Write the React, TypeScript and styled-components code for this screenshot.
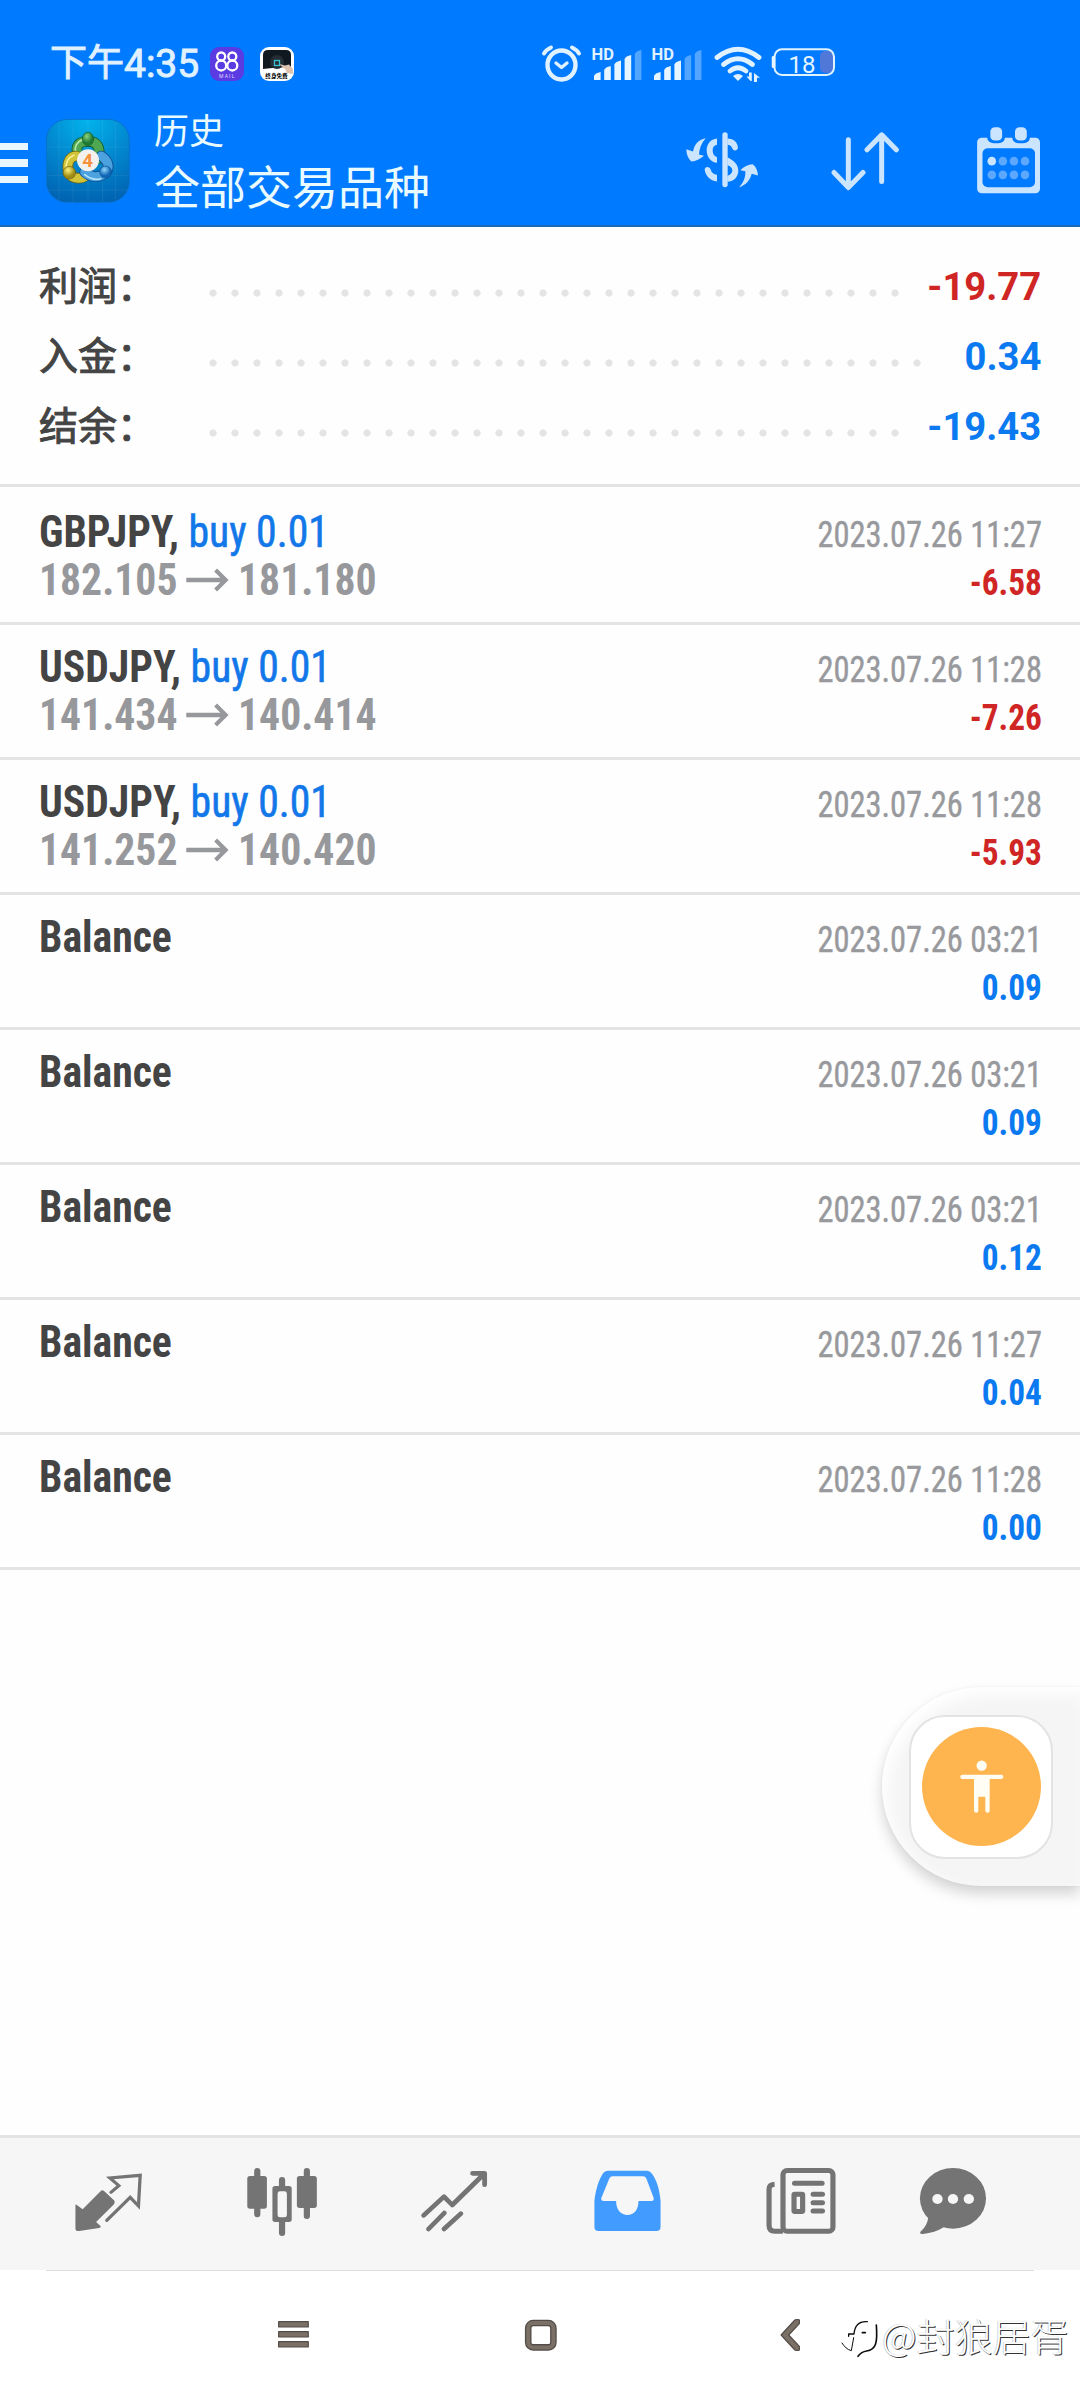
import React from 'react';
import styled, { createGlobalStyle } from 'styled-components';

const BLUE = '#007aff';
const GREY = '#747474';
const ICON = '#cce5ff';
const CJK = '"Noto Sans CJK SC", sans-serif';

const GlobalStyle = createGlobalStyle`
  * { box-sizing: border-box; }
  body { margin: 0; background: #fff; font-family: Roboto, ${CJK}; }
  svg { display: block; flex: none; }
`;

const Screen = styled.div`
  position: relative;
  width: 1080px;
  height: 2400px;
  display: flex;
  flex-direction: column;
  overflow: hidden;
  background: #fefefe;
`;

/* ---------- header ---------- */
const Header = styled.header`
  height: 227px;
  background: ${BLUE};
  border-bottom: 2px solid #1a6ab8;
`;
const StatusBar = styled.div`
  height: 92px;
  padding: 36px 0 0 50px;
  display: flex;
  align-items: center;
`;
const Clock = styled.span`
  width: 160px;
  font: 400 39px/56px Roboto, ${CJK};
  color: #e0f1ff;
  -webkit-text-stroke: 0.9px #e0f1ff;
  white-space: nowrap;
  display: flex;
`;
const ClockPrefix = styled.span`
  font-size: 37px;
`;
const Badge = styled.div<{ $bg: string }>`
  width: 34px;
  height: 34px;
  margin-right: 16px;
  border-radius: 9px;
  background: ${(p) => p.$bg};
  overflow: hidden;
`;
const StatusIcons = styled.div`
  margin-left: 226px;
`;
const AppBar = styled.div`
  height: 133px;
  padding: 4px 40px 0 0;
  display: flex;
  align-items: center;
`;
const Burger = styled.div`
  width: 28px;
  display: flex;
  flex-direction: column;
  gap: 9px;
  margin: 5px 18px 0 0;
`;
const BurgerLine = styled.i`
  height: 7.6px;
  background: #e8f7ff;
`;
const Titles = styled.div`
  margin-left: 24px;
  display: flex;
  flex-direction: column;
  color: #eafbff;
  font-family: ${CJK};
  white-space: nowrap;
`;
const Title = styled.div`
  font-size: 35px;
  line-height: 44px;
  margin-bottom: 2px;
`;
const Subtitle = styled.div`
  font-size: 46px;
  line-height: 62px;
`;
const Actions = styled.div`
  margin-left: auto;
  display: flex;
`;
const Action = styled.div<{ $gap?: number }>`
  margin-left: ${(p) => p.$gap || 0}px;
`;

/* ---------- summary ---------- */
const Summary = styled.section`
  height: 260px;
  padding: 24px 39px 0 39px;
  border-bottom: 3px solid #e4e4e4;
`;
const SummaryRow = styled.div`
  height: 70px;
  display: flex;
  align-items: center;
`;
const SummaryLabel = styled.span`
  width: 163px;
  margin-bottom: 6px;
  font: 400 39px/60px ${CJK};
  color: #444;
  -webkit-text-stroke: 1px #444;
  white-space: nowrap;
`;
const Dots = styled.div`
  flex: 1;
  height: 22px;
  margin: 14px 16px 0 0;
  display: flex;
  flex-wrap: wrap;
  overflow: hidden;
`;
const Dot = styled.i`
  width: 22px;
  height: 22px;
  background: radial-gradient(circle at 50% 50%, #e4e4e4 3.2px, transparent 4px);
`;
const SummaryValue = styled.span<{ $color: string }>`
  margin-top: 2px;
  font: 700 39px/60px Roboto, sans-serif;
  color: ${(p) => p.$color};
  transform: scaleX(0.98);
  transform-origin: right;
`;

/* ---------- deals ---------- */
const List = styled.section`
  padding-top: 3px;
  flex: 1;
`;
const Deal = styled.article`
  height: 135px;
  padding: 0 38px 0 39px;
  display: flex;
  justify-content: space-between;
  border-bottom: 3px solid #e4e4e4;
  font-family: 'Roboto Condensed', Roboto, sans-serif;
  white-space: nowrap;
`;
const DealLeft = styled.div`
  padding-top: 18px;
  font-size: 44px;
  line-height: 48px;
  transform: scaleX(0.947);
  transform-origin: left;
`;
const DealRight = styled.div`
  padding-top: 21px;
  font-size: 36px;
  line-height: 48px;
  text-align: right;
`;
const Name = styled.div`
  font-weight: 700;
  color: #444;
`;
const Side = styled.span`
  font-weight: 400;
  color: #1277e8;
  -webkit-text-stroke: 0.6px #1277e8;
`;
const Prices = styled.div`
  display: flex;
  align-items: center;
  font-weight: 700;
  color: #97989c;
  gap: 9px;
`;
const When = styled.div`
  color: #98999d;
  -webkit-text-stroke: 0.4px #98999d;
  transform: scaleX(0.902);
  transform-origin: right;
`;
const Profit = styled.div<{ $color: string }>`
  font-weight: 700;
  color: ${(p) => p.$color};
  transform: scaleX(0.925);
  transform-origin: right;
`;

/* ---------- floating accessibility panel ---------- */
const Floating = styled.div`
  position: absolute;
  top: 1687px;
  right: 0;
  width: 198px;
  height: 199px;
  padding-left: 27px;
  display: flex;
  align-items: center;
  border-radius: 100px 0 0 100px;
  background: #f5f5f5;
  box-shadow: 0 8px 14px rgba(0, 0, 0, 0.17), 0 0 3px rgba(0, 0, 0, 0.05),
    inset 6px 8px 16px #fff;
`;
const FloatingCard = styled.div`
  width: 144px;
  height: 144px;
  display: flex;
  align-items: center;
  justify-content: center;
  border: 2px solid #e3e3e3;
  border-radius: 36px;
  background: #fff;
`;
const Disc = styled.div`
  width: 119px;
  height: 119px;
  border-radius: 50%;
  background: #feb54f;
`;

/* ---------- bottom ---------- */
const Tabs = styled.nav`
  height: 135px;
  flex: none;
  padding: 0 0 6px 22px;
  display: flex;
  align-items: center;
  background: #f6f6f6;
  border-top: 3px solid #e3e5e4;
`;
const Tab = styled.div<{ $w?: number }>`
  width: ${(p) => p.$w || 173}px;
  display: flex;
  justify-content: center;
`;
const SystemNav = styled.nav`
  position: relative;
  height: 130px;
  flex: none;
  background: #fff;
`;
const Hairline = styled.div`
  height: 1px;
  margin: 0 46px;
  background: #dedede;
`;
const NavKeys = styled.div`
  display: flex;
  padding: 48px 0 0 278px;
`;
const NavKey = styled.div<{ $gap?: number }>`
  margin-left: ${(p) => p.$gap || 0}px;
`;
const Watermark = styled.div`
  position: absolute;
  left: 840px;
  top: 37px;
  display: flex;
  align-items: center;
  white-space: nowrap;
`;
const WatermarkText = styled.span`
  margin-left: 2px;
  font: 300 38px/56px ${CJK};
  color: #fff;
  text-shadow: 1px 1px 0.5px #333, -0.5px -0.5px 1px #bbb;
`;

/* An icon whose view box is a window of the screen, in screen pixels. */
type Win = { x: number; y: number; w: number; h: number; children: React.ReactNode };
const Icon = ({ x, y, w, h, children }: Win) => (
  <svg width={w} height={h} viewBox={`${x} ${y} ${w} ${h}`} fill="none" strokeLinecap="round" strokeLinejoin="round">
    {children}
  </svg>
);

const Signal = ({ x, level }: { x: number; level: number }) => (
  <g>
    <text x={x - 1.5} y={60} fontSize="16.5" fontWeight="700" fontFamily="Roboto, sans-serif" fill="#e0f1ff">HD</text>
    {[72, 66, 60.5, 55, 50].map((t, i) => (
      <path
        key={i}
        d={`M${x + 1 + i * 10.2} 80 V${t + 4} Q${x + 2 + i * 10.2} ${t + 1} ${x + 7.6 + i * 10.2} ${t} V80Z`}
        fill="#e6f5ff"
        opacity={i < level ? 1 : 0.36}
      />
    ))}
  </g>
);

const StatusGlyphs = () => (
  <Icon x={536} y={40} w={304} h={48}>
    <g stroke="#e0f1ff">
      <ellipse cx="561.5" cy="65" rx="14" ry="14.5" strokeWidth="4.4" />
      <path d="M556 63 L561.5 67.5 L567 63" strokeWidth="3.4" />
      <path d="M544 53.5 Q546 50 551 47.5 M579 53.5 Q577 50 572 47.5" strokeWidth="4" />
    </g>
    <Signal x={593} level={4} />
    <Signal x={653} level={3} />
    <g stroke="#e0f1ff" strokeWidth="4.8">
      <path d="M717 57.5 Q738 41 759 57.5" />
      <path d="M723.5 64.5 Q738 53 752.5 64.5" />
      <path d="M730 71 Q738 64.5 746 71" />
    </g>
    <path d="M733 76 Q738 72 743 76 L738 81Z" fill="#e0f1ff" />
    <path d="M750.5 81 L746.5 76.5 H749 V72.5 H751.8 V81Z M754 73 L760 77.8 H757 V82 H754Z" fill="#e0f1ff" />
    <rect x="820" y="51" width="13" height="22" rx="5" fill="#4f78d8" />
    <rect x="774.5" y="49.3" width="59.5" height="25.6" rx="7.5" stroke="#dff2ff" strokeWidth="2" />
    <path d="M773.5 57.5 V66.5" stroke="#e6f5ff" strokeWidth="3.5" />
    <text x="788.5" y="72.8" fontSize="24" fontFamily="Roboto, sans-serif" fill="#e6f5ff">18</text>
  </Icon>
);

const MailBadge = () => (
  <Badge $bg="#5b3ce2">
    <svg width="34" height="34" viewBox="0 0 34 34" fill="none">
      <g stroke="#fff" strokeWidth="2.3">
        <circle cx="11.2" cy="9.5" r="4" /><circle cx="11.2" cy="18.5" r="5" />
        <circle cx="22.3" cy="9.5" r="4" /><circle cx="22.3" cy="18.5" r="5" />
      </g>
      <text x="17.3" y="30.5" fontSize="5" letterSpacing="1.2" textAnchor="middle" fontFamily="Roboto, sans-serif" fill="#e0d8ff">MAIL</text>
    </svg>
  </Badge>
);

const VideoBadge = () => (
  <Badge $bg="#fff">
    <svg width="34" height="34" viewBox="0 0 34 34" fill="none">
      <path d="M3 22 V8 Q3 3 8 3 H26 Q31 3 31 8 V20 Q17 20 3 22Z" fill="#101820" />
      <circle cx="17" cy="15" r="7" fill="#252c33" />
      <rect x="14.5" y="13.5" width="5" height="5" stroke="#35c4d8" strokeWidth="1.3" />
      <path d="M19 17 L25 18.5 L29 17.5 L33 22 V27 L27 26 L25 22Z" fill="#dfc3ae" />
      <text x="16.5" y="31" fontSize="5.6" fontWeight="700" textAnchor="middle" fontFamily={CJK} fill="#000">终身免费</text>
    </svg>
  </Badge>
);

const AppLogo = () => (
  <Icon x={46} y={119} w={84} h={84}>
    <defs>
      <radialGradient id="sky" cx="50%" cy="0%" r="105%">
        <stop offset="0" stopColor="#02b4ec" /><stop offset="0.5" stopColor="#0288cf" /><stop offset="1" stopColor="#0061b0" />
      </radialGradient>
      <radialGradient id="gr" cx="40%" cy="30%"><stop offset="0" stopColor="#8bd47e" /><stop offset="1" stopColor="#1f7a34" /></radialGradient>
      <radialGradient id="ye" cx="40%" cy="30%"><stop offset="0" stopColor="#fbf27c" /><stop offset="1" stopColor="#a08c14" /></radialGradient>
      <radialGradient id="bl" cx="40%" cy="30%"><stop offset="0" stopColor="#8fd6fb" /><stop offset="1" stopColor="#1268b8" /></radialGradient>
    </defs>
    <g transform="translate(0 110) scale(.33333)">
      <rect x="139" y="28" width="249" height="249" rx="62" fill="url(#sky)" stroke="#0a70cc" strokeWidth="3" />
      <path d="M143 111H385M143 197H385M143 240H385M177 40V268M219 29V276M264 29V276M308 29V276M346 40V268" stroke="#fff" strokeOpacity=".1" strokeWidth="2" />
      <path d="M236 136 C222 108 238 94 264 94 C292 94 304 114 294 146" stroke="#145e2b" strokeWidth="32" />
      <path d="M236 136 C222 108 238 94 264 94 C292 94 304 114 294 146" stroke="#4fa851" strokeWidth="27" />
      <path d="M228 128 C220 106 238 88 258 88" stroke="#b8e8a8" strokeWidth="5" />
      <path d="M230 138 C204 138 198 168 208 192 C218 206 242 208 254 200" stroke="#6e6412" strokeWidth="32" />
      <path d="M230 138 C204 138 198 168 208 192 C218 206 242 208 254 200" stroke="#d0c338" strokeWidth="27" />
      <path d="M222 136 C204 142 197 158 199 172" stroke="#f7ef94" strokeWidth="5" />
      <path d="M304 138 C328 154 330 176 314 190 C298 204 272 204 254 186" stroke="#0d4f91" strokeWidth="32" />
      <path d="M304 138 C328 154 330 176 314 190 C298 204 272 204 254 186" stroke="#4ba2de" strokeWidth="27" />
      <path d="M254 194 C270 208 290 210 302 206" stroke="#b4e2fb" strokeWidth="5" />
      <ellipse cx="264" cy="87" rx="17" ry="20" fill="url(#gr)" stroke="#145e2b" strokeWidth="2" />
      <circle cx="208" cy="188" r="19" fill="url(#ye)" stroke="#6e6412" strokeWidth="2" />
      <circle cx="317" cy="186" r="18" fill="url(#bl)" stroke="#0d4f91" strokeWidth="2" />
      <circle cx="264" cy="151" r="33" fill="#f3f1ee" />
      <text x="263" y="171" fontSize="56" fontWeight="700" textAnchor="middle" fontFamily="Roboto, sans-serif" fill="#f5913a">4</text>
    </g>
  </Icon>
);

const CurrencyIcon = () => (
  <Icon x={686} y={124.5} w={73} h={72}>
    <g transform="translate(670 120) scale(.33333)">
      <path d="M165 43V192" stroke={ICON} strokeWidth="16" />
      <g fill={ICON}>
        <path d="M141 54 C122 56 110 70 110 90 C110 110 124 126 141 127 V110 C131 106 128 99 128 90 C128 80 132 75 141 73Z" />
        <path d="M104 146 C106 136 120 138 122 147 C124 156 130 161 141 163 V183 C120 180 106 166 104 146Z" />
        <path d="M172 54 C192 54 203 66 204 82 C202 92 190 92 187 84 C184 77 180 73 172 73Z" />
        <path d="M172 110 C192 120 205 132 205 150 C205 170 190 184 172 184 V166 C181 163 187 158 187 150 C187 142 181 136 172 134Z" />
        <path d="M107 53 C84 58 74 70 69 93 L49 86 C49 100 54 113 64 123 C78 123 90 116 102 106 L87 102 C88 84 94 68 107 53Z" />
        <path d="M207 200 C226 196 240 180 245 160 L264 165 C263 150 258 138 248 131 C234 132 222 138 211 149 L226 152 C227 172 219 188 207 200Z" />
      </g>
    </g>
  </Icon>
);

const SortIcon = () => (
  <Icon x={831} y={124.5} w={68} h={72}>
    <g transform="translate(670 120) scale(.33333)" stroke={ICON} strokeWidth="15">
      <path d="M535 58V200M492 156L535 201L579 156M635 183V45M591 88L635 43L679 88" />
    </g>
  </Icon>
);

const CalendarIcon = () => (
  <Icon x={977} y={124.5} w={63} h={72}>
    <g transform="translate(520 0) scale(.35714 .33333)">
      <rect x="1280" y="412" width="176" height="166" rx="13" fill={ICON} />
      <rect x="1295" y="443" width="147" height="117" rx="15" fill={BLUE} />
      <rect x="1308" y="370" width="50" height="58" rx="18" fill={BLUE} />
      <rect x="1378" y="370" width="50" height="58" rx="18" fill={BLUE} />
      <rect x="1317" y="380" width="33" height="40" rx="13" fill={ICON} />
      <rect x="1386" y="380" width="33" height="40" rx="13" fill={ICON} />
      {[482, 523].map((y) => [1321, 1352, 1383, 1414].map((x) => (
        <ellipse key={`${x}-${y}`} cx={x} cy={y} rx="12" ry="13" fill={x === 1321 && y === 482 ? ICON : '#5ca8ff'} />
      )))}
    </g>
  </Icon>
);

const TAB_SCALE = 'scale(.34444 .33333)';
const LEFT = `translate(0 2120) ${TAB_SCALE}`;
const RIGHT = `translate(540 2120) ${TAB_SCALE}`;

const QuotesTab = () => (
  <Icon x={73} y={2165} w={71} h={73}>
    <g transform={LEFT}>
      <path d="M222 254 L240 268 L292 214 Q297 208 302 213 L331 241 Q336 247 331 253 L279 306 L292 318 Q294 322 288 324 L230 333 Q219 334 219 326 V256 Q219 252 222 254Z" fill={GREY} />
      <path d="M322 217 L345 197 L319 174 L407 166 L402 258 L378 232 L310 301" stroke={GREY} strokeWidth="9.5" strokeLinejoin="miter" />
    </g>
  </Icon>
);
const ChartTab = () => (
  <Icon x={245} y={2165} w={72} h={73}>
    <g transform={LEFT}>
      <g fill={GREY}>
        <rect x="715" y="168" width="57" height="98" rx="8" />
        <rect x="859" y="168" width="58" height="96" rx="8" />
        <rect x="788" y="198" width="56" height="108" rx="8" />
      </g>
      <path d="M744 153V283M888 153V288M816 180V339" stroke={GREY} strokeWidth="18" />
      <rect x="803" y="214" width="27" height="78" rx="7" fill="#f6f6f6" />
    </g>
  </Icon>
);
const TradeTab = () => (
  <Icon x={419} y={2165} w={71} h={73}>
    <g transform={LEFT} stroke={GREY} strokeWidth="14">
      <path d="M1230 286L1289 230L1313 255L1405 162M1372 160H1407V194M1244 327L1290 279M1289 327L1338 281" />
    </g>
  </Icon>
);
const HistoryTab = () => (
  <Icon x={592} y={2165} w={71} h={73}>
    <g transform={RIGHT}>
      <path d="M158 243 C162 205 172 178 183 160 Q188 152 196 152 H311 Q319 152 324 160 C338 180 347 205 350 243 V320 Q350 333 338 333 H170 Q158 333 158 320Z" fill="#429cff" />
      <path d="M201 176 Q204 169 211 169 H299 Q306 169 309 176 L330 234 Q332 243 323 243 H286 C286 270 272 285 254 285 C236 285 221 270 221 243 H186 Q176 243 178 234Z" fill="#f6f6f6" />
    </g>
  </Icon>
);
const NewsTab = () => (
  <Icon x={765} y={2165} w={72} h={73}>
    <g transform={RIGHT} stroke={GREY} strokeWidth="15">
      <rect x="705.5" y="151.5" width="145" height="182" rx="12" />
      <path d="M681 193 Q665 194 665 208 V316 Q665 334 682 334 H705" strokeLinecap="butt" />
      <path d="M739 190H819M793 223H820M793 248H820M793 273H820" />
      <rect x="737.5" y="222.5" width="25" height="52" rx="2" />
    </g>
  </Icon>
);
const ChatTab = () => (
  <Icon x={919} y={2165} w={68} h={73}>
    <g transform={RIGHT}>
      <ellipse cx="1199" cy="235" rx="96" ry="91" fill={GREY} />
      <path d="M1127 285 C1128 310 1115 325 1104 336 Q1102 342 1112 342 C1135 340 1155 333 1172 322Z" fill={GREY} />
      {[1154, 1199, 1245].map((x) => <circle key={x} cx={x} cy="237" r="15" fill="#f6f6f6" />)}
    </g>
  </Icon>
);

const Arrow = () => (
  <svg width="46" height="26" viewBox="0 0 46 26" fill="none" stroke="#97989c" strokeWidth="4.4">
    <path d="M0.5 13H43M31.5 3L42 13L31.5 23" />
  </svg>
);

const Person = () => (
  <svg width="119" height="119" viewBox="185 202 357 357">
    <g fill="#fffdf4">
      <circle cx="364" cy="318" r="15.5" />
      <rect x="300" y="345" width="129" height="13" rx="6" />
      <path d="M341 352 H388 V453 Q388 459 382 459 Q375 459 375 453 V411 H354 V453 Q354 459 348 459 Q341 459 341 453Z" />
    </g>
  </svg>
);

const NAV = { fill: '#7a7066', stroke: '#544c49', strokeWidth: 3.5 };

const RED = '#d02525';
const POS = '#0b7af0';

const summary = [
  { label: '利润：', value: '-19.77', color: RED },
  { label: '入金：', value: '0.34', color: POS },
  { label: '结余：', value: '-19.43', color: POS },
];

type DealData = { name: string; side?: string; from?: string; to?: string; when: string; profit: string };
const deals: DealData[] = [
  { name: 'GBPJPY,', side: 'buy 0.01', from: '182.105', to: '181.180', when: '2023.07.26 11:27', profit: '-6.58' },
  { name: 'USDJPY,', side: 'buy 0.01', from: '141.434', to: '140.414', when: '2023.07.26 11:28', profit: '-7.26' },
  { name: 'USDJPY,', side: 'buy 0.01', from: '141.252', to: '140.420', when: '2023.07.26 11:28', profit: '-5.93' },
  { name: 'Balance', when: '2023.07.26 03:21', profit: '0.09' },
  { name: 'Balance', when: '2023.07.26 03:21', profit: '0.09' },
  { name: 'Balance', when: '2023.07.26 03:21', profit: '0.12' },
  { name: 'Balance', when: '2023.07.26 11:27', profit: '0.04' },
  { name: 'Balance', when: '2023.07.26 11:28', profit: '0.00' },
];

export default function App() {
  return (
    <Screen>
      <GlobalStyle />
      <Header>
        <StatusBar>
          <Clock><ClockPrefix>下午</ClockPrefix>4:35</Clock>
          <MailBadge />
          <VideoBadge />
          <StatusIcons>
            <StatusGlyphs />
          </StatusIcons>
        </StatusBar>
        <AppBar>
          <Burger><BurgerLine /><BurgerLine /><BurgerLine /></Burger>
          <AppLogo />
          <Titles>
            <Title>历史</Title>
            <Subtitle>全部交易品种</Subtitle>
          </Titles>
          <Actions>
            <Action><CurrencyIcon /></Action>
            <Action $gap={72}><SortIcon /></Action>
            <Action $gap={78}><CalendarIcon /></Action>
          </Actions>
        </AppBar>
      </Header>

      <Summary>
        {summary.map((s) => (
          <SummaryRow key={s.label}>
            <SummaryLabel>{s.label}</SummaryLabel>
            <Dots>{Array.from({ length: 40 }, (_, i) => <Dot key={i} />)}</Dots>
            <SummaryValue $color={s.color}>{s.value}</SummaryValue>
          </SummaryRow>
        ))}
      </Summary>

      <List>
        {deals.map((d, i) => (
          <Deal key={i}>
            <DealLeft>
              <Name>{d.name}{d.side && <Side> {d.side}</Side>}</Name>
              {d.from && <Prices><span>{d.from}</span><Arrow /><span>{d.to}</span></Prices>}
            </DealLeft>
            <DealRight>
              <When>{d.when}</When>
              <Profit $color={d.profit.startsWith('-') ? RED : POS}>{d.profit}</Profit>
            </DealRight>
          </Deal>
        ))}
      </List>

      <Tabs>
        <Tab><QuotesTab /></Tab>
        <Tab><ChartTab /></Tab>
        <Tab><TradeTab /></Tab>
        <Tab><HistoryTab /></Tab>
        <Tab><NewsTab /></Tab>
        <Tab $w={132}><ChatTab /></Tab>
      </Tabs>
      <SystemNav>
        <Hairline />
        <NavKeys>
          <NavKey>
            <Icon x={278} y={2319} w={32} h={33}>
              <g transform={LEFT} {...NAV}>
                <rect x="809" y="605" width="86" height="16" />
                <rect x="809" y="635" width="86" height="16" />
                <rect x="809" y="665" width="86" height="16" />
              </g>
            </Icon>
          </NavKey>
          <NavKey $gap={214}>
            <Icon x={524} y={2319} w={34} h={33}>
              <rect x="528.2" y="2323" width="25.2" height="24.4" rx="5" stroke="#544c49" strokeWidth="6.6" />
              <rect x="528.2" y="2323" width="25.2" height="24.4" rx="5" stroke="#7a7066" strokeWidth="4" />
            </Icon>
          </NavKey>
          <NavKey $gap={222}>
            <Icon x={780} y={2319} w={22} h={33}>
              <g transform={RIGHT} {...NAV}>
                <path d="M700 645L740 600Q748 597 753 600V611L722 645L753 679V690Q748 693 740 690Z" />
              </g>
            </Icon>
          </NavKey>
        </NavKeys>
        <Watermark>
          <Icon x={840} y={2314} w={40} h={56}>
            <g transform="translate(830 2300) scale(.33333)" stroke="#0c0c0c" strokeWidth="4">
              <path d="M56 130V123H72C74 100 84 84 112 86" />
              <path d="M97 119H106" strokeWidth="5" />
              <path d="M139 96C143 150 138 170 110 174C96 176 90 182 84 190" strokeWidth="5" />
              <path d="M71 134L64 173C52 170 44 162 36 150" strokeWidth="3" />
            </g>
          </Icon>
          <WatermarkText>@封狼居胥</WatermarkText>
        </Watermark>
      </SystemNav>

      <Floating>
        <FloatingCard>
          <Disc><Person /></Disc>
        </FloatingCard>
      </Floating>
    </Screen>
  );
}
